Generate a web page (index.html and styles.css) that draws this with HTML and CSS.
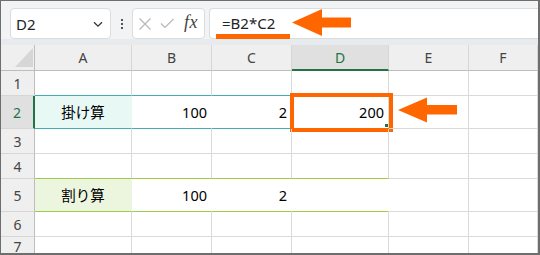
FILE: index.html
```html
<!DOCTYPE html>
<html lang="ja">
<head>
<meta charset="utf-8">
<link rel="stylesheet" href="styles.css">
</head>
<body>
<div class="frame">
  <div class="toolbar">
    <div class="namebox">
      <span class="nb-text">D2</span>
      <svg class="chev" width="10" height="7" viewBox="0 0 10 7"><path d="M1 1.2 L5 5.2 L9 1.2" fill="none" stroke="#333" stroke-width="1.3"/></svg>
    </div>
    <div class="dots"><i></i><i></i><i></i></div>
    <div class="fxbox">
      <svg width="14" height="14" viewBox="0 0 14 14" class="ic-x"><path d="M1.5 1.5 L12.5 12.5 M12.5 1.5 L1.5 12.5" stroke="#b8b8b8" stroke-width="1.2" fill="none"/></svg>
      <svg width="15" height="12" viewBox="0 0 15 12" class="ic-ok"><path d="M1 5.5 L5 9.5 L13.5 1" stroke="#b8b8b8" stroke-width="1.2" fill="none"/></svg>
      <span class="fx">fx</span>
    </div>
    <div class="formula">=B2*C2</div>
  </div>
  <div class="sheet">
    <div class="corner"><svg width="33" height="25" viewBox="0 0 33 25"><polygon points="14,22 32,22 32,3" fill="#d6d6d6"/></svg></div>
    <div class="ch">A</div><div class="ch">B</div><div class="ch">C</div><div class="ch sel">D</div><div class="ch">E</div><div class="ch">F</div>

    <div class="rh">1</div>
    <div class="c tb"></div><div class="c tb"></div><div class="c tb"></div><div class="c"></div><div class="c"></div><div class="c"></div>

    <div class="rh sel">2</div>
    <div class="c tb nr mint ctr jp">掛け算</div><div class="c tb nr num">100</div><div class="c tb nr num">2</div>
    <div class="c num active">200<span class="hl"></span></div><div class="c"></div><div class="c"></div>

    <div class="rh">3</div>
    <div class="c"></div><div class="c"></div><div class="c"></div><div class="c"></div><div class="c"></div><div class="c"></div>

    <div class="rh">4</div>
    <div class="c gb"></div><div class="c gb"></div><div class="c gb"></div><div class="c gb"></div><div class="c"></div><div class="c"></div>

    <div class="rh">5</div>
    <div class="c gb nr lime ctr jp">割り算</div><div class="c gb nr num">100</div><div class="c gb nr num">2</div><div class="c gb nr"></div><div class="c"></div><div class="c"></div>

    <div class="rh">6</div>
    <div class="c"></div><div class="c"></div><div class="c"></div><div class="c"></div><div class="c"></div><div class="c"></div>

    <div class="rh">7</div>
    <div class="c"></div><div class="c"></div><div class="c"></div><div class="c"></div><div class="c"></div><div class="c"></div>
  </div>
  <svg class="annot" width="540" height="255" viewBox="0 0 540 255">
    <rect x="216" y="34" width="74" height="5" fill="#ff6600"/>
    <polygon points="292,22.5 322,9 322,17.5 351,17.5 351,27.5 322,27.5 322,36" fill="#ff6600"/>
    <polygon points="398,110 427,97.5 427,105 457,105 457,114.5 427,114.5 427,122.5" fill="#ff6600"/>
  </svg>
</div>
</body>
</html>
```

FILE: styles.css
```css
* { box-sizing: border-box; }
html, body { margin: 0; padding: 0; background: #fff; }
body { font-family: "Noto Sans", "Noto Sans CJK JP", sans-serif; }

.frame {
  position: relative;
  width: 540px;
  height: 255px;
  border-style: solid;
  border-color: #6e6e6e;
  border-width: 1px 2px 2px 1px;
  overflow: hidden;
  display: flex;
  flex-direction: column;
}

.toolbar {
  height: 44px;
  flex: none;
  display: flex;
  align-items: flex-start;
  padding: 7px 0 0 9px;
  background: #f2f3f4;
  border-bottom: 6px solid #e8ebee;
}

.namebox {
  width: 101px;
  height: 31px;
  background: #fff;
  border: 1px solid #dcdcdc;
  border-radius: 4px;
  display: flex;
  align-items: center;
  justify-content: space-between;
  padding: 0 7px 0 5px;
  font-size: 15px;
  color: #222;
}
.chev { margin-top: 1px; }

.dots {
  width: 21px;
  height: 31px;
  display: flex;
  flex-direction: column;
  align-items: center;
  justify-content: center;
  gap: 2px;
}
.dots i {
  display: block;
  width: 2px;
  height: 2px;
  background: #555;
}

.fxbox {
  width: 73px;
  height: 31px;
  background: #fff;
  border: 1px solid #dcdcdc;
  border-radius: 4px;
  display: flex;
  align-items: center;
  padding-left: 5px;
}
.ic-x { margin-right: 8px; }
.ic-ok { margin-right: 9px; margin-top: 1px; }
.fx {
  font-family: "Liberation Serif", serif;
  font-style: italic;
  font-size: 18px;
  color: #444;
  letter-spacing: 0.5px;
  margin-top: -2px;
}

.formula {
  flex: 1;
  height: 31px;
  margin-left: 4px;
  background: #fff;
  border: 1px solid #dcdcdc;
  border-right: none;
  border-radius: 4px 0 0 4px;
  padding-left: 12px;
  font-size: 15px;
  line-height: 28px;
  color: #222;
}

.sheet {
  flex: 1;
  display: grid;
  grid-template-columns: 34px 97px 80px 80px 97px 80px 1fr;
  grid-template-rows: 26px 25px 33px 25px 25px 33px 25px 1fr;
  font-size: 14.5px;
  color: #000;
}

.corner {
  background: #efefef;
  border-right: 1px solid #bdbdbd;
  border-bottom: 1px solid #bdbdbd;
}
.corner svg { display: block; }

.ch {
  background: #efefef;
  border-right: 1px solid #d6d6d6;
  border-bottom: 1px solid #bdbdbd;
  display: flex;
  align-items: center;
  justify-content: center;
  font-size: 14px;
  color: #444;
}
.ch.sel {
  background: #e0e0e0;
  color: #217346;
  border-bottom: 2px solid #217346;
}

.rh {
  background: #efefef;
  border-right: 1px solid #bdbdbd;
  border-bottom: 1px solid #d6d6d6;
  display: flex;
  align-items: center;
  justify-content: center;
  font-size: 14px;
  color: #444;
}
.rh.sel {
  background: #e0e0e0;
  color: #217346;
  border-right: 2px solid #217346;
}

.c {
  position: relative;
  border-right: 1px solid #dadada;
  border-bottom: 1px solid #dadada;
  display: flex;
  align-items: center;
  padding: 0 4px 1px;
}
.c.num { justify-content: flex-end; }
.c.ctr { justify-content: center; }
.c.jp { font-family: "Noto Sans CJK JP", sans-serif; font-size: 14.5px; }
.c.tb { border-bottom-color: #41adb8; }
.c.gb { border-bottom-color: #9ccd4a; }
.c.nr { border-right-color: transparent; }
.c.mint { background: #e7f8f5; }
.c.lime { background: #ecf5de; }

.hl {
  position: absolute;
  left: -2px;
  top: -3px;
  width: 103px;
  height: 39px;
  border: 4px solid #ff6600;
}
.hl::after {
  content: "";
  position: absolute;
  right: 1px;
  bottom: 1px;
  width: 3px;
  height: 3px;
  background: #217346;
}

.annot {
  position: absolute;
  left: -1px;
  top: -1px;
  pointer-events: none;
}
```
